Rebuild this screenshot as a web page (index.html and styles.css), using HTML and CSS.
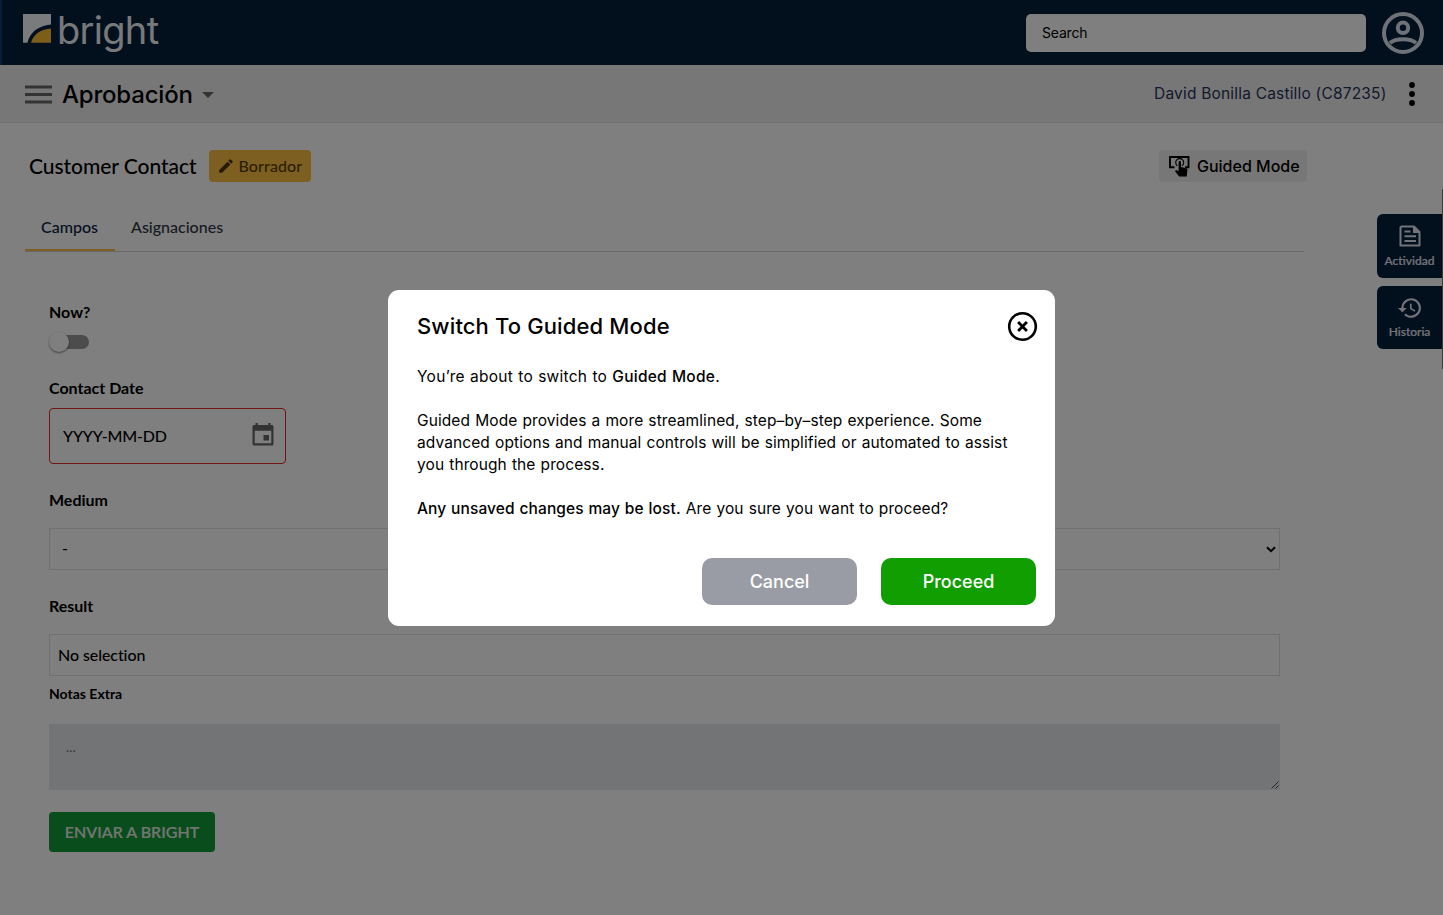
FILE: index.html
```html
<!DOCTYPE html>
<html lang="es">
<head>
<meta charset="utf-8">
<title>Aprobación</title>
<link rel="stylesheet" href="styles.css">
</head>
<body>
<div class="page">
  <header class="header">
    <div class="logo">
      <svg class="logo-mark" viewBox="0 0 28 29" width="28" height="29"><path d="M0 0H28V10.500C15 11.500 6.500 19 4.500 28.700H0Z" fill="#f4f6fa"/><path d="M28 14.500V28.700H8C10.500 20 18 15 28 14.500Z" fill="#f9bd30"/></svg>
      <span class="logo-text">bright</span>
    </div>
    <div class="header-right">
      <div class="search">Search</div>
      <svg class="avatar" viewBox="0 0 42 42" width="42" height="42" fill="none" stroke="#dfe3f2" stroke-width="4"><circle cx="21" cy="21" r="19"/><circle cx="21" cy="15.800" r="5.200"/><path d="M8 31C13.500 26 28.500 26 34 31"/></svg>
    </div>
  </header>
  <div class="toolbar">
    <div class="toolbar-left">
      <svg viewBox="0 0 27 19" width="27" height="19" stroke="#666" stroke-width="3"><path d="M0 2H27M0 9.500H27M0 17H27"/></svg>
      <h1 class="section-title">Aprobación</h1>
      <svg class="caret" viewBox="0 0 12 6" width="12" height="6"><path d="M0 0H12L6 6Z" fill="#666"/></svg>
    </div>
    <div class="toolbar-right">
      <span class="user">David Bonilla Castillo (C87235)</span>
      <svg viewBox="0 0 6 24" width="6" height="24"><circle cx="3" cy="3" r="2.900"/><circle cx="3" cy="12" r="2.900"/><circle cx="3" cy="21" r="2.900"/></svg>
    </div>
  </div>
  <main class="main">
    <div class="title-row">
      <h2 class="title">Customer Contact</h2>
      <span class="badge"><svg viewBox="0 0 24 24" width="18" height="18" fill="#4c3500"><path d="M3 17.250V21h3.750L17.810 9.940l-3.750-3.750L3 17.250zM20.710 7.040a1 1 0 0 0 0-1.410l-2.340-2.340a1 1 0 0 0-1.410 0l-1.830 1.830 3.750 3.750 1.830-1.830z"/></svg><span class="badge-text">Borrador</span></span>
      <span class="guided"><svg viewBox="0 0 22 22" width="22" height="22"><path d="M6.500 12.300H2V2H20.500V12.300H17" fill="none" stroke="#000" stroke-width="1.900"/><path d="M9.300 10.800a4 4 0 1 1 4.800 0" fill="none" stroke="#000" stroke-width="1.100"/><path d="M10.600 7.200a1.200 1.200 0 0 1 2.400 0V12l5.200 1.300q1.200.4 1.200 1.600L18.700 21.500H11.200L7 16.200l1-1.100 2.600.8Z"/></svg><span>Guided Mode</span></span>
    </div>
    <nav class="tabs"><span class="tab tab-active">Campos</span><span class="tab">Asignaciones</span></nav>
    <form class="form">
      <label class="label">Now?</label>
      <div class="switch"><span class="track"></span><span class="knob"></span></div>
      <label class="label">Contact Date</label>
      <div class="date"><span>YYYY-MM-DD</span>
        <svg viewBox="0 0 22 24" width="22" height="24"><path d="M3.500 1h2.200v2h10.600V1h2.200v2H20a1.500 1.500 0 0 1 1.500 1.500V22a1.500 1.500 0 0 1-1.500 1.500H2A1.500 1.500 0 0 1 .5 22V4.500A1.500 1.500 0 0 1 2 3h1.500ZM2.700 8.700V21.300H19.300V8.700ZM11.500 13h5.500v5.500h-5.500Z" fill="#666" fill-rule="evenodd"/></svg>
      </div>
      <label class="label">Medium</label>
      <div class="box select"><span>-</span><svg viewBox="0 0 10 7" width="10" height="7"><path d="M1 1.200L5 5.200L9 1.200" fill="none" stroke="#000" stroke-width="2"/></svg></div>
      <label class="label">Result</label>
      <div class="box">No selection</div>
      <label class="label label-small">Notas Extra</label>
      <div class="notes"><span>...</span><svg viewBox="0 0 8 8" width="8" height="8"><path d="M.5 7.500L7.500.5M4.500 7.500L7.500 4.500" stroke="#444" stroke-width="1"/></svg></div>
      <button type="button" class="submit">ENVIAR A BRIGHT</button>
    </form>
  </main>
  <aside class="side">
    <div class="side-tab"><svg viewBox="0 0 22 22" width="22" height="22"><path d="M2.500 1.500H15L20.500 7V20.500H1.500V2.500Z" fill="none" stroke="#e4e8f4" stroke-width="2" stroke-linejoin="round"/><path d="M14 1V8H21ZM5.500 5.500h6v2h-6zM5.500 10.300h11.500v2H5.500zM5.500 15h11.500v2H5.500z" fill="#e4e8f4"/></svg><span>Actividad</span></div>
    <div class="side-tab side-tab-short"><svg viewBox="1 2 22 20" width="24" height="22" fill="#e4e8f4"><path d="M13 3a9 9 0 0 0-9 9H1l3.890 3.890.07.14L9 12H6a7 7 0 1 1 2.060 4.940l-1.420 1.420A9 9 0 1 0 13 3zm-1 5v5l4.280 2.540.72-1.210-3.500-2.080V8H12z"/></svg><span>Historia</span></div>
  </aside>
  <span class="edge-left"></span>
  <span class="edge-right"></span>
</div>
<div class="overlay">
  <section class="modal">
    <div class="modal-head">
      <h2 class="modal-title">Switch To Guided Mode</h2>
      <svg class="close" viewBox="0 0 30 30" width="30" height="30" fill="none" stroke="#000"><circle cx="15.500" cy="15.500" r="13.300" stroke-width="2.600"/><path d="M11.100 11.100L19.900 19.900M19.900 11.100L11.100 19.900" stroke-width="2.800"/></svg>
    </div>
    <div class="modal-body">
      <p class="intro">You’re about to switch to <b>Guided Mode</b>.</p>
      <p>Guided Mode provides a more streamlined, step–by–step experience. Some<br>advanced options and manual controls will be simplified or automated to assist<br>you through the process.</p>
      <p><b>Any unsaved changes may be lost.</b> Are you sure you want to proceed?</p>
    </div>
    <div class="actions">
      <button class="btn btn-cancel">Cancel</button>
      <button class="btn btn-proceed">Proceed</button>
    </div>
  </section>
</div>
</body>
</html>
```

FILE: styles.css
```css
* { box-sizing: border-box; }
body { margin: 0; font-family: Lato, sans-serif; color: #000; background: #fff; overflow: hidden; }
h1, h2, p { margin: 0; }
svg { display: block; flex: none; }
button { border: 0; font-family: inherit; }
.page { position: relative; height: 915px; }

.header { height: 65px; background: #041e3a; display: flex; justify-content: space-between; padding-left: 23px; padding-right: 19px; }
.logo { display: flex; align-items: flex-start; gap: 6px; padding-top: 14px; }
.logo-text { font: 400 38px/38px Inter, sans-serif; color: #f0f2f6; letter-spacing: -0.7px; margin-top: -3px; }
.header-right { display: flex; align-items: center; gap: 16px; }
.search { width: 340px; height: 38px; border-radius: 5px; background: #fff; padding-left: 16px; font: 400 14px/38px Inter, sans-serif; letter-spacing: -0.2px; }

.toolbar { height: 58px; background: #efefef; border-bottom: 1px solid #e4e4e4; display: flex; justify-content: space-between; padding: 2px 28.500px 0 25px; }
.toolbar-left, .toolbar-right { display: flex; align-items: center; }
.section-title { font: 500 24px/30px Inter, sans-serif; letter-spacing: -0.2px; margin-left: 10px; }
.caret { margin-left: 9px; }
.toolbar-right { gap: 22px; padding-bottom: 1px; }
.user { font: 400 15.500px/22px Inter, sans-serif; letter-spacing: 0.19px; color: #273459; }

.main { padding: 27px 139px 0 25px; }
.title-row { height: 32px; display: flex; align-items: center; padding-left: 4px; }
.title { font-size: 21px; font-weight: 500; line-height: 32px; letter-spacing: -0.05px; }
.badge { margin-left: 12px; width: 102px; height: 32px; border-radius: 4px; background: #f9bf43; color: #5a3e00; display: flex; align-items: center; padding-left: 8px; gap: 4px; font-size: 16px; font-weight: 500; letter-spacing: 0.1px; }
.badge-text { padding-bottom: 2px; }
.guided { margin-left: auto; margin-right: -3px; width: 148px; height: 32px; border-radius: 4px; background: #efefef; display: flex; align-items: center; gap: 7px; padding-left: 9px; font: 500 16px/32px Inter, sans-serif; white-space: nowrap; }
.tabs { margin-top: 25px; height: 45px; border-bottom: 1px solid #d0d0d0; display: flex; font-size: 16px; font-weight: 500; line-height: 40px; color: #303744; }
.tab { padding: 0 16px; height: 44px; }
.tab-active { color: #0c2143; border-bottom: 2px solid #f9bf43; width: 90px; }

.form { padding: 50px 24px 0; width: 1279px; display: flex; flex-direction: column; align-items: flex-start; }
.label { font-size: 16px; font-weight: 700; line-height: 20px; }
.label-small { font-size: 14px; margin-top: 8px; }
.switch { display: grid; align-items: center; margin: 10px 0 26px; height: 20px; }
.track, .knob { grid-area: 1 / 1; }
.track { width: 36px; height: 14px; margin-left: 4px; border-radius: 7px; background: #999; }
.knob { width: 20px; height: 20px; border-radius: 50%; background: #fff; box-shadow: 0 1px 2px rgba(0,0,0,.5); }
.date { margin: 10px 0 26px; width: 237px; height: 56px; border: 1px solid #e02b2b; border-radius: 4px; display: flex; align-items: center; justify-content: space-between; padding: 0 11px 4px 13px; font-size: 16px; font-weight: 500; letter-spacing: -0.15px; }
.date span { padding-top: 3px; }
.box { width: 100%; height: 42px; border: 1px solid #e0e0e0; display: flex; align-items: center; padding: 0 8px 2px; font-size: 16px; font-weight: 500; letter-spacing: -0.08px; margin-top: 18px; }
.select { justify-content: space-between; padding: 0 3px 0 12px; margin-bottom: 26px; }
.select span { padding-bottom: 3px; }
.notes { margin-top: 20px; width: 100%; height: 66px; background: #e4e8ec; display: flex; justify-content: space-between; align-items: flex-end; padding: 0 1px 1px 17px; font-size: 14px; color: #777; }
.notes span { align-self: flex-start; padding-top: 14px; line-height: 18px; }
.submit { margin-top: 22px; width: 166px; height: 40px; border-radius: 4px; background: #159a39; color: #e6eee6; font-size: 16px; font-weight: 500; padding: 0 0 2px; white-space: nowrap; -webkit-text-stroke: 0.2px #e6eee6; }

.side { position: absolute; right: 0; top: 214px; width: 66px; display: flex; flex-direction: column; gap: 8px; }
.side-tab { height: 64px; background: #041e3a; border-radius: 6px 0 0 6px; color: #e4e8f4; display: flex; flex-direction: column; align-items: center; padding: 11px 1px 0 0; gap: 6px; font-size: 12px; font-weight: 500; line-height: 16px; -webkit-text-stroke: 0.2px #e4e8f4; }
.side-tab-short { height: 63px; gap: 5px; }
.edge-left { position: absolute; left: 0; top: 0; width: 2px; height: 65px; background: #073a78; }
.edge-right { position: absolute; right: 0; top: 189px; width: 1px; height: 180px; background: #777; }

.overlay { position: fixed; inset: 0; background: rgba(0,0,0,.5); display: flex; align-items: center; justify-content: center; }
.modal { width: 667px; height: 336px; background: #fff; border-radius: 11px; padding: 21px 19px 21px 29px; font-family: Inter, sans-serif; display: flex; flex-direction: column; }
.modal-head { display: flex; justify-content: space-between; align-items: center; margin-right: -1px; height: 30px; }
.close { overflow: visible; }
.modal-title { font-size: 22px; font-weight: 500; letter-spacing: 0.13px; }
.modal-body { margin-top: 25px; font-size: 15.500px; line-height: 22px; letter-spacing: 0.1px; word-spacing: 0.6px; white-space: nowrap; display: flex; flex-direction: column; gap: 22px; }
.modal-body b { font-weight: 500; }
.modal-body .intro { letter-spacing: 0.25px; }
.actions { margin-top: auto; display: flex; justify-content: flex-end; gap: 24px; }
.btn { width: 155px; height: 47px; border-radius: 10px; color: #fff; font-size: 18px; font-weight: 500; }
.btn-cancel { background: #999ca5; }
.btn-proceed { background: #109e00; }
```
